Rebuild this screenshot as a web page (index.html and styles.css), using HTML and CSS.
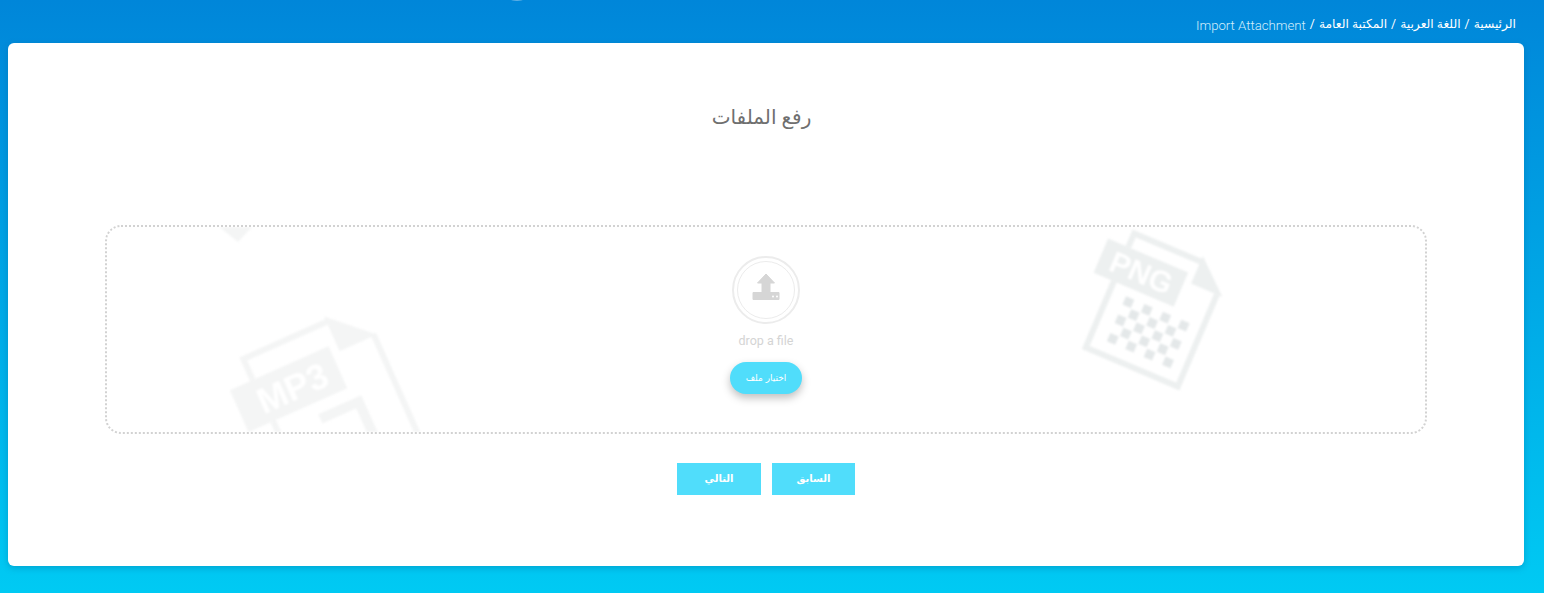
FILE: index.html
```html
<!DOCTYPE html>
<html lang="ar">

<head>
    <meta charset="UTF-8">
    <meta name="viewport" content="width=device-width, initial-scale=1.0">
    <title>Import Attachment</title>
    <link rel="stylesheet" href="styles.css">
</head>

<body>
    <div class="page">
        <span class="top-glint"></span>
        <ul class="breadcrumb" dir="rtl">
            <li><a href="#">الرئيسية</a></li>
            <li class="sep">/</li>
            <li><a href="#">اللغة العربية</a></li>
            <li class="sep">/</li>
            <li><a href="#">المكتبة العامة</a></li>
            <li class="sep">/</li>
            <li class="current">Import Attachment</li>
        </ul>

        <div class="card">
            <h2 class="card-title">رفع الملفات</h2>

            <div class="dropzone">
                <!-- faded file icons behind the drop area, drawn in page coordinates -->
                <svg class="bg-files" viewBox="107 227 1318 205">
                    <path class="bg-soft" d="M218 226 H253 L238 242 Z"/>

                    <g transform="translate(328 318) rotate(-24)">
                        <path class="bg-soft-line" d="M-94 26 V3 H-2"/>
                        <path class="bg-soft" d="M-3 -3 L38 35 H-3 Z"/>
                        <path class="bg-soft-line" d="M35 33 V210"/>
                        <rect class="bg-soft" x="-119" y="26" width="108" height="46"/>
                        <text class="bg-label bg-label-mp3" x="-61" y="62" text-anchor="middle">MP3</text>
                        <path class="bg-soft-line bg-thick" d="M-48 89 H-6 V210"/>
                        <path class="bg-soft-line" d="M-92 72 V210"/>
                    </g>

                    <g transform="translate(1156 310) rotate(23)">
                        <path class="bg-mid-line" d="M-50 -47 V-62 H24"/>
                        <path class="bg-mid" d="M22 -68 L56 -38 H22 Z"/>
                        <path class="bg-mid-line" d="M-50 -10 V62 H50 V-38"/>
                        <rect class="bg-mid" x="-72" y="-47" width="87" height="37"/>
                        <text class="bg-label bg-label-png" x="-28" y="-18" text-anchor="middle">PNG</text>
                        <g class="bg-check">
                            <rect x="-33" y="-1" width="9" height="9"/><rect x="-13" y="-1" width="9" height="9"/><rect x="7" y="-1" width="9" height="9"/><rect x="27" y="-1" width="9" height="9"/>
                            <rect x="-23" y="9" width="9" height="9"/><rect x="-3" y="9" width="9" height="9"/><rect x="17" y="9" width="9" height="9"/>
                            <rect x="-33" y="19" width="9" height="9"/><rect x="-13" y="19" width="9" height="9"/><rect x="7" y="19" width="9" height="9"/><rect x="27" y="19" width="9" height="9"/>
                            <rect x="-23" y="29" width="9" height="9"/><rect x="-3" y="29" width="9" height="9"/><rect x="17" y="29" width="9" height="9"/>
                            <rect x="-33" y="39" width="9" height="9"/><rect x="-13" y="39" width="9" height="9"/><rect x="7" y="39" width="9" height="9"/><rect x="27" y="39" width="9" height="9"/>
                        </g>
                    </g>
                </svg>

                <div class="upload-ring">
                    <div class="upload-ring-inner">
                        <svg class="upload-icon" viewBox="0 0 28 28">
                            <path d="M14 1 L22.5 10 H18 V19.5 H27 V26.5 H1 V19.5 H10 V10 H5.5 Z" fill="#d6d6d6" stroke="#d6d6d6" stroke-width="1" stroke-linejoin="round"/>
                            <circle cx="21" cy="23.5" r="1" fill="#fff"/>
                            <circle cx="25" cy="23.5" r="1" fill="#fff"/>
                        </svg>
                    </div>
                </div>
                <p class="drop-text">drop a file</p>
                <button class="pick-btn" type="button">اختيار ملف</button>
            </div>

            <div class="actions" dir="rtl">
                <button class="step-btn step-prev" type="button">السابق</button>
                <button class="step-btn step-next" type="button">التالي</button>
            </div>
        </div>
    </div>
</body>

</html>
```

FILE: styles.css
```css
* {
    box-sizing: border-box;
}

body {
    margin: 0;
    font-family: Roboto, "DejaVu Sans", sans-serif;
}

.page {
    position: relative;
    height: 593px;
    padding: 0 20px 27px 8px;
    background: linear-gradient(180deg, #0086d9 0%, #00caf3 100%);
    overflow: hidden;
}

.top-glint {
    position: absolute;
    top: -2px;
    left: 511px;
    width: 12px;
    height: 3px;
    border-radius: 50%;
    background: #5fb0e4;
}

.breadcrumb {
    display: flex;
    align-items: center;
    gap: 4px;
    height: 43px;
    margin: 0;
    padding: 5px 8px 0 0;
    list-style: none;
    font-size: 12.3px;
    color: #fff;
}

.breadcrumb a {
    color: #fff;
    text-decoration: none;
}

.breadcrumb .current {
    font-size: 13.2px;
    font-weight: 300;
    color: #d5eefb;
    padding-top: 2px;
}

.card {
    height: 523px;
    padding-top: 59px;
    background: #fff;
    border-radius: 6px;
    box-shadow: 0 2px 6px rgba(0, 100, 150, 0.35);
}

.card-title {
    margin: 0 0 88px;
    height: 35px;
    padding-right: 9px;
    text-align: center;
    font-size: 20px;
    line-height: 30px;
    font-weight: 400;
    color: #6f6f6f;
}

.dropzone {
    position: relative;
    display: flex;
    flex-direction: column;
    align-items: center;
    width: 1322px;
    height: 209px;
    margin: 0 auto 0 97px;
    padding-top: 29px;
    border: 2px dotted #d2d2d2;
    border-radius: 16px;
    overflow: hidden;
}

.bg-files {
    position: absolute;
    top: 0;
    left: 0;
    width: 1318px;
    height: 205px;
    filter: blur(1px);
}

.bg-soft {
    fill: #f4f5f5;
}

.bg-soft-line {
    fill: none;
    stroke: #f4f5f5;
    stroke-width: 6;
}

.bg-thick {
    stroke-width: 10;
}

.bg-mid {
    fill: #edf0f0;
}

.bg-mid-line {
    fill: none;
    stroke: #edf0f0;
    stroke-width: 6;
}

.bg-check {
    fill: #e4e8e9;
}

.bg-label {
    font-family: "Liberation Sans", sans-serif;
    font-weight: 700;
    fill: #fff;
}

.bg-label-mp3 {
    font-size: 36px;
}

.bg-label-png {
    font-size: 30px;
}

.upload-ring {
    position: relative;
    display: flex;
    align-items: center;
    justify-content: center;
    width: 68px;
    height: 68px;
    border: 2px solid #ececec;
    border-radius: 50%;
}

.upload-ring-inner {
    display: flex;
    align-items: center;
    justify-content: center;
    width: 58px;
    height: 58px;
    border: 1.5px solid #ececec;
    border-radius: 50%;
}

.upload-icon {
    width: 28px;
    height: 28px;
    margin-bottom: 7px;
}

.drop-text {
    position: relative;
    margin: 9px 0 0;
    font-size: 12.5px;
    line-height: 16px;
    color: #d4d4d4;
}

.pick-btn {
    position: relative;
    width: 72px;
    height: 32px;
    margin-top: 13px;
    border: none;
    border-radius: 16px;
    background: #50ddfb;
    color: #fff;
    font-family: "DejaVu Sans", sans-serif;
    font-size: 9px;
    box-shadow: 0 4px 8px rgba(0, 0, 0, 0.25);
    cursor: pointer;
}

.actions {
    display: flex;
    justify-content: center;
    gap: 11px;
    margin-top: 29px;
}

.step-btn {
    height: 32px;
    padding-bottom: 2px;
    border: none;
    background: #50ddfb;
    color: #fff;
    font-family: "DejaVu Sans", sans-serif;
    font-size: 10px;
    font-weight: 700;
    cursor: pointer;
}

.step-prev {
    width: 83px;
}

.step-next {
    width: 84px;
}
```
